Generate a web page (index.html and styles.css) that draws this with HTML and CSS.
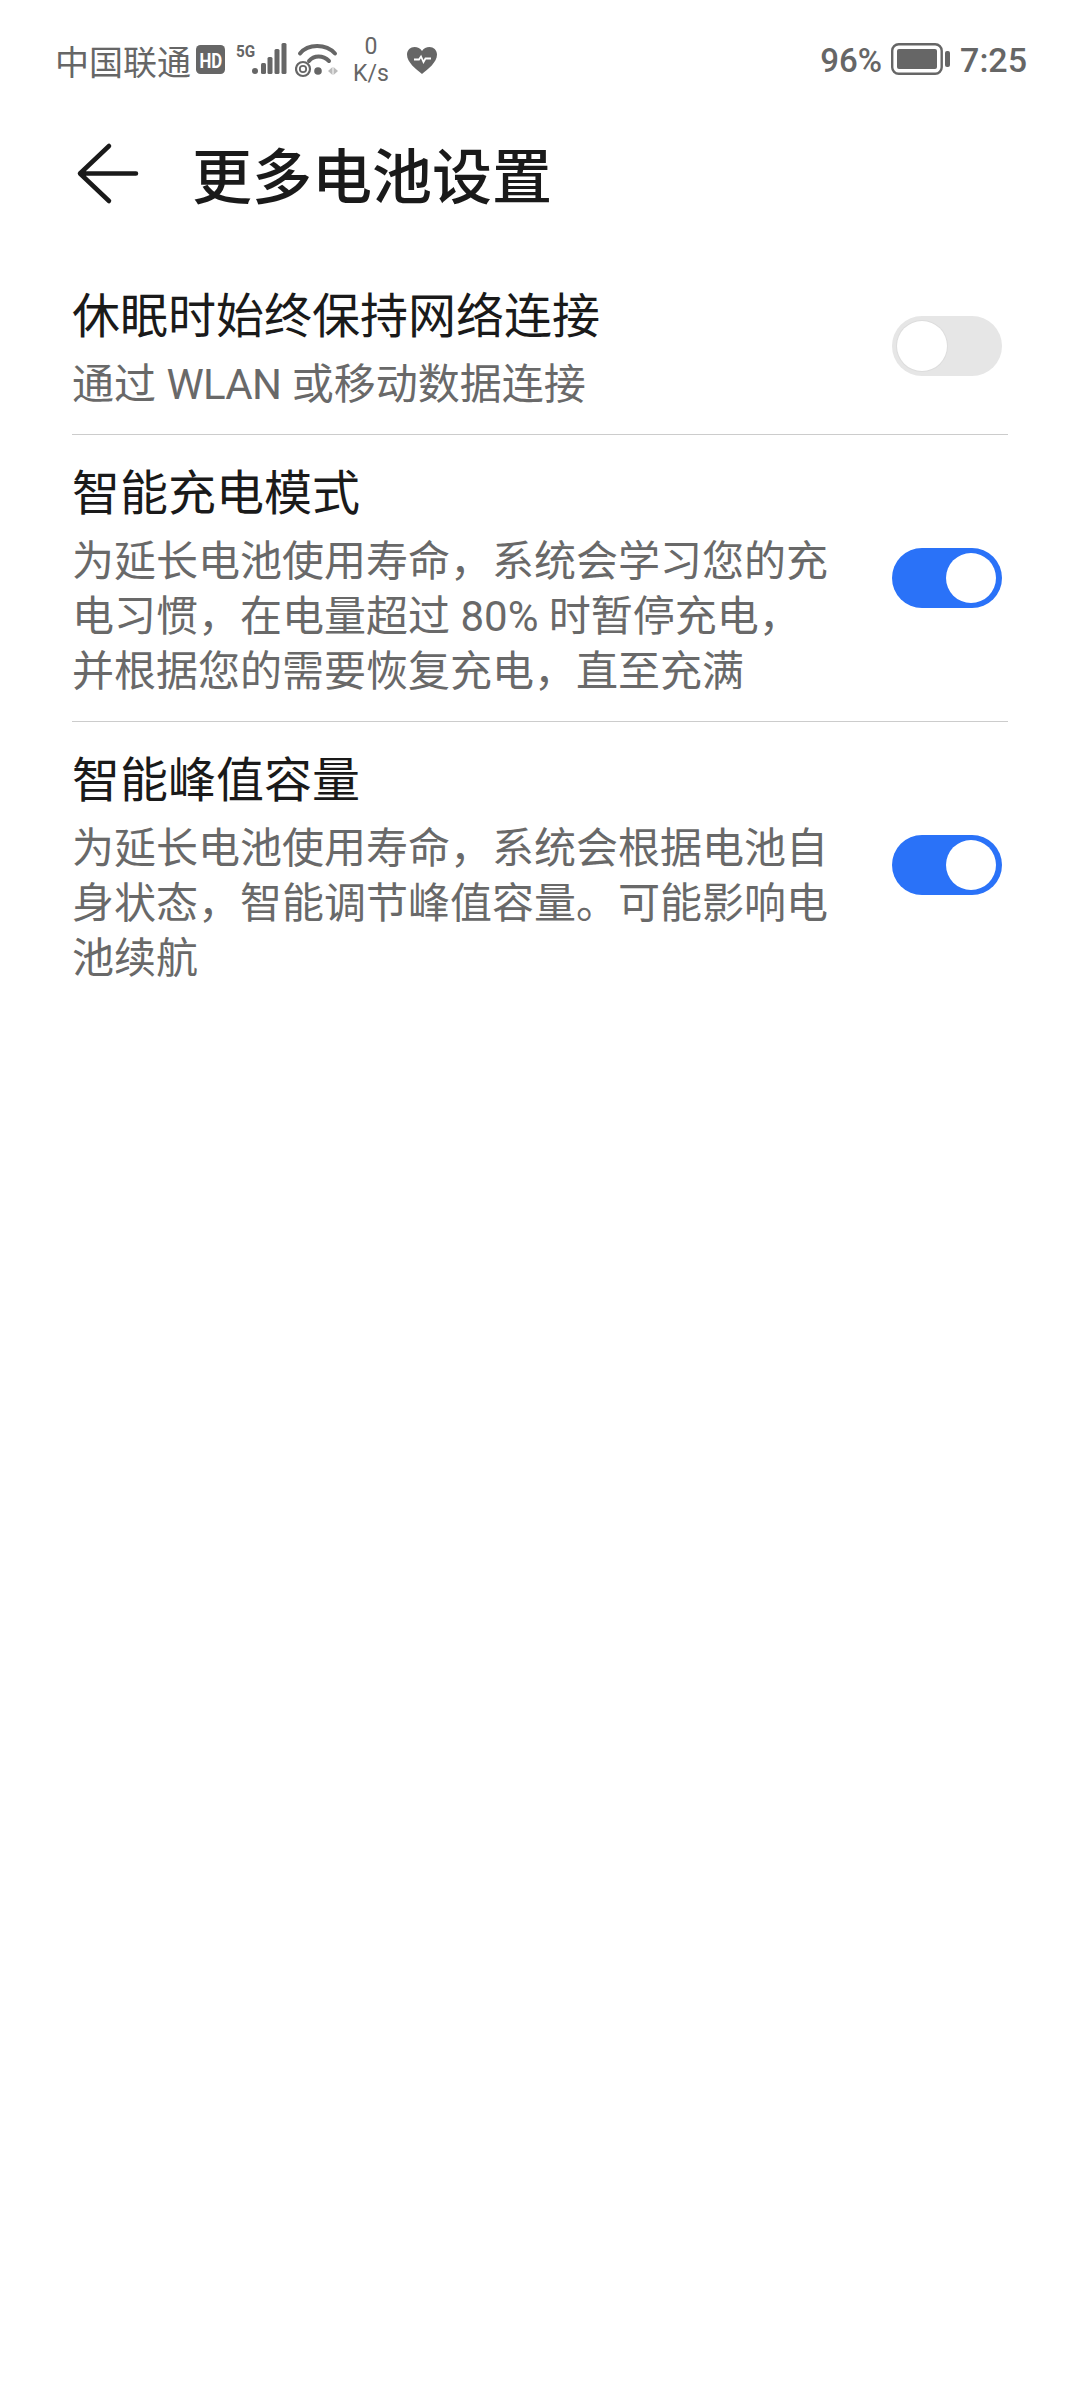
FILE: index.html
```html
<!DOCTYPE html>
<html lang="zh-CN">
<head>
  <meta charset="utf-8">
  <title>更多电池设置</title>
  <link rel="stylesheet" href="styles.css">
</head>
<body>
  <div class="statusbar">
    <div class="status-left">
      <span class="carrier">中国联通</span>
      <svg class="ic-hd" width="29" height="40" viewBox="0 0 29 40">
        <rect x="0" y="5" width="29" height="29" rx="4.500" fill="#666"/>
        <text transform="translate(3.500 27.500) scale(.8 1)" class="hd-text">HD</text>
      </svg>
      <svg class="ic-signal" width="51" height="40" viewBox="0 0 51 40">
        <text transform="translate(0 17) scale(.9 1)" class="g5-text">5G</text>
        <circle cx="19" cy="31" r="3" fill="#666"/>
        <rect x="25" y="23" width="5" height="11" rx="1.500" fill="#666"/>
        <rect x="31.500" y="17" width="5" height="17" rx="1.500" fill="#666"/>
        <rect x="38.500" y="9" width="5" height="25" rx="1.500" fill="#666"/>
        <rect x="45.500" y="3" width="5" height="31" rx="1.500" fill="#666"/>
      </svg>
      <svg class="ic-wifi" width="45" height="40" viewBox="0 0 45 40">
        <path d="M5 13.500 C13 3.500 31 3.500 40 13.500" fill="none" stroke="#666" stroke-width="4" stroke-linecap="round"/>
        <path d="M14 21 C19 15 28 15 34 21" fill="none" stroke="#666" stroke-width="4" stroke-linecap="round"/>
        <circle cx="8" cy="29" r="7" fill="none" stroke="#666" stroke-width="2.200"/>
        <circle cx="8" cy="29" r="3.200" fill="none" stroke="#666" stroke-width="1.800"/>
        <circle cx="23" cy="31" r="3.800" fill="#666"/>
        <path d="M37.500 27 L33 31 L37.500 35 Z" fill="#bbb"/>
        <path d="M38.500 27 L43 31 L38.500 35 Z" fill="#bbb"/>
      </svg>
      <div class="speed"><span>0</span><span>K/s</span></div>
      <svg class="ic-heart" width="30" height="40" viewBox="0 0 30 40">
        <path d="M15 34 C9 29 0 22.500 0 14.500 C0 10 3.500 7 7.500 7 C10.500 7 13.500 8.500 15 11 C16.500 8.500 19.500 7 22.500 7 C26.500 7 30 10 30 14.500 C30 22.500 21 29 15 34 Z" fill="#666"/>
        <path d="M7 19.500 H12 L14 16.500 L16.500 22 L18.500 18.500 H24" fill="none" stroke="#fff" stroke-width="1.800"/>
      </svg>
    </div>
    <div class="status-right">
      <span class="pct">96%</span>
      <svg class="ic-batt" width="60" height="40" viewBox="0 0 60 40">
        <rect x="1.200" y="4.200" width="49.500" height="29.500" rx="6.500" fill="none" stroke="#666" stroke-width="2.400"/>
        <rect x="6" y="9" width="40" height="20" rx="2" fill="#666"/>
        <rect x="54" y="11" width="5" height="16" rx="2" fill="#666"/>
      </svg>
      <span class="clock">7:25</span>
    </div>
  </div>

  <header class="titlebar">
    <svg class="ic-back" width="64" height="64" viewBox="0 0 64 64">
      <path d="M33 4 L4 31.500 L33 59 M4 31.500 H60" fill="none" stroke="#1a1a1a" stroke-width="4.500" stroke-linecap="round" stroke-linejoin="round"/>
    </svg>
    <h1 class="page-title">更多电池设置</h1>
  </header>

  <main class="list">
    <section class="row">
      <div class="row-text">
        <div class="row-title">休眠时始终保持网络连接</div>
        <div class="row-desc">通过 <span class="tight">WLAN</span> 或移动数据连接</div>
      </div>
      <div class="toggle"><span class="knob"></span></div>
    </section>
    <section class="row">
      <div class="row-text">
        <div class="row-title">智能充电模式</div>
        <div class="row-desc">为延长电池使用寿命，系统会学习您的充电习惯，在电量超过 80% 时暂停充电，<br>并根据您的需要恢复充电，直至充满</div>
      </div>
      <div class="toggle on"><span class="knob"></span></div>
    </section>
    <section class="row">
      <div class="row-text">
        <div class="row-title">智能峰值容量</div>
        <div class="row-desc">为延长电池使用寿命，系统会根据电池自身状态，智能调节峰值容量。可能影响电池续航</div>
      </div>
      <div class="toggle on"><span class="knob"></span></div>
    </section>
  </main>
</body>
</html>
```

FILE: styles.css
```css
* {
  box-sizing: border-box;
}

body {
  margin: 0;
  width: 1080px;
  height: 2388px;
  background: #fff;
  font-family: Roboto, "Noto Sans CJK SC", sans-serif;
  overflow: hidden;
}

.statusbar {
  height: 60px;
  margin-top: 30px;
  padding: 0 53px 0 55px;
  display: flex;
  justify-content: space-between;
  align-items: center;
  color: #666;
}

.status-left,
.status-right {
  display: flex;
  align-items: center;
}

.carrier {
  font-size: 34px;
}

.ic-hd {
  margin-left: 5px;
}

.hd-text {
  font: 700 21px Roboto, sans-serif;
  fill: #fff;
}

.ic-signal {
  margin-left: 11px;
}

.g5-text {
  font: 700 17px Roboto, sans-serif;
  fill: #666;
}

.ic-wifi {
  margin-left: 8px;
}

.speed {
  width: 36px;
  margin-left: 13px;
  display: flex;
  flex-direction: column;
  align-items: center;
  font-size: 23px;
  line-height: 27px;
  white-space: nowrap;
}

.ic-heart {
  margin-left: 18px;
}

.pct {
  font-size: 33px;
  font-weight: 500;
}

.ic-batt {
  margin-left: 9px;
}

.clock {
  margin-left: 9px;
  font-size: 34px;
  font-weight: 500;
}

.titlebar {
  height: 168px;
  padding-left: 76px;
  display: flex;
  align-items: center;
}

.page-title {
  margin: 0 0 4px 52px;
  font-size: 60px;
  font-weight: 500;
  color: #1a1a1a;
}

.list {
  padding: 0 72px;
}

.row {
  display: flex;
  align-items: center;
  padding: 26px 0 22px;
  border-bottom: 1px solid #ccc;
}

.row:last-child {
  border-bottom: none;
}

.row-text {
  width: 760px;
}

.row-title {
  font-size: 48px;
  line-height: 66px;
  color: #1a1a1a;
}

.row-desc {
  margin-top: 7px;
  font-size: 42px;
  line-height: 55px;
  color: #696969;
}

.tight {
  letter-spacing: -0.7px;
}

.toggle {
  width: 110px;
  height: 60px;
  margin: 0 0 4px 60px;
  padding: 5px;
  border-radius: 30px;
  background: #e6e6e6;
  display: flex;
}

.toggle.on {
  padding-right: 6px;
  background: #2a72f8;
  justify-content: flex-end;
}

.knob {
  width: 50px;
  height: 50px;
  border-radius: 50%;
  background: #fff;
  box-shadow: 0 0 0 1px #ddd;
}

.toggle.on .knob {
  box-shadow: none;
}
```
